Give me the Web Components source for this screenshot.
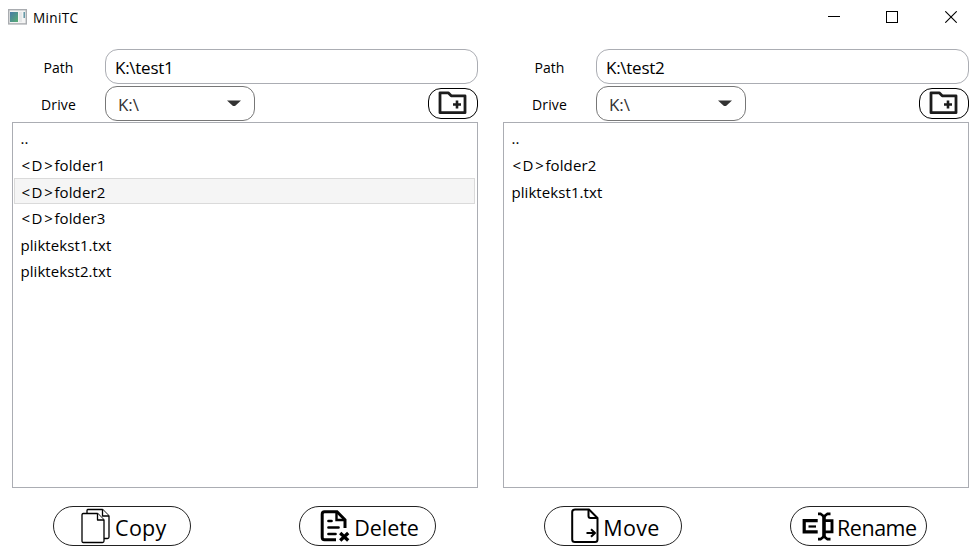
<!DOCTYPE html>
<html lang="en">
<head>
<meta charset="utf-8">
<title>MiniTC</title>
<style>
html,body{margin:0;height:100%;background:#fff;overflow:hidden}
body{font-family:"Open Sans","Noto Sans",sans-serif;color:#000}
</style>
</head>
<body>
<mini-window></mini-window>
<script>
const define = (name, html, init) => {
  const t = document.createElement('template');
  t.innerHTML = html;
  customElements.define(name, class extends HTMLElement {
    connectedCallback() {
      if (this.shadowRoot) return;
      this.attachShadow({mode: 'open'}).append(t.content.cloneNode(true));
      if (init) init(this, this.shadowRoot);
    }
  });
};

/* A single line of text tracked to a given advance width;
   a leading <D> marker gets its own, wider tracking. */
define('text-run', `<style>
:host{display:inline-block;white-space:nowrap;flex:none}
</style>`, (el, root) => {
  const add = (text, w) => {
    const s = document.createElement('span');
    s.textContent = text;
    root.append(s);
    s.style.letterSpacing = (w - s.getBoundingClientRect().width) / text.length + 'px';
  };
  const text = el.getAttribute('text'), w = +el.getAttribute('w');
  if (text.startsWith('<D>')) {
    el.style.marginLeft = '1px';
    add('<D>', 33);
    add(text.slice(3), w - 33);
  } else add(text, w);
});

define('title-bar', `<style>
:host{display:flex;height:34px;align-items:center;padding:0 21px 0 8px;box-sizing:border-box;font-size:13.6px;line-height:20px}
svg{display:block;flex:none}
text-run{margin-left:6px;margin-top:1px}
.ctl{display:flex;margin-left:auto}
.ctl svg+svg{margin-left:46px}
.ctl svg+svg+svg{margin-left:47px}
</style>
<svg width="19" height="16" viewBox="0 0 19 16"><defs><linearGradient id="g" x1="0" y1="0" x2="1" y2="1"><stop offset="0" stop-color="#467aa8"/><stop offset="1" stop-color="#58ad72"/></linearGradient></defs><rect x=".7" y=".7" width="17.6" height="14.2" fill="#f4f4f4" stroke="#a9acb0" stroke-width="1.4"/><rect x="2" y="3" width="8" height="10" fill="url(#g)"/><rect x="11" y="3" width="3" height="10" fill="#e5e7e8"/><rect x="15.5" y="3" width="1.4" height="6" fill="#5791a0"/></svg>
<text-run text="MiniTC" w="45.3"></text-run>
<div class="ctl">
<svg width="12" height="12"><path d="M0 5.5H12" stroke="#000"/></svg>
<svg width="12" height="12"><rect x=".5" y=".5" width="11" height="11" fill="none" stroke="#000"/></svg>
<svg width="12" height="12"><path d="M.3 .3L11.7 11.7M11.7 .3L.3 11.7" stroke="#000" stroke-width="1.1"/></svg>
</div>`);

define('path-field', `<style>
:host{display:flex;align-items:center;box-sizing:border-box;height:35px;border:1px solid #abadb3;border-radius:13px;padding:2px 0 0 9px;font-size:17px;line-height:24px}
</style><slot></slot>`);

define('drive-select', `<style>
:host{display:flex;align-items:center;justify-content:space-between;box-sizing:border-box;width:150px;height:35px;border:1px solid #777;border-radius:12px;padding:2px 13px 0 12px;font-size:17px;line-height:24px;color:#333}
svg{margin-top:-3px}
</style><slot></slot><svg width="14" height="6"><path d="M0 .4H14L8.6 5.5Q7 6.5 5.4 5.5Z" fill="#333"/></svg>`);

define('folder-button', `<style>
:host{display:flex;align-items:center;justify-content:center;box-sizing:border-box;width:50.5px;height:31px;margin-top:-1px;border:1px solid #000;border-radius:13px}
</style><svg width="30" height="24" viewBox="0 0 30 24"><path d="M2 1.8H10.2L13.2 4.8H27V21.7H2Z" fill="none" stroke="#1c1c1c" stroke-width="2.8" stroke-linejoin="round"/><path d="M19 9.5V17.5M15 13.5H23" stroke="#1c1c1c" stroke-width="2.6"/></svg>`);

define('file-row', `<style>
:host{display:flex;align-items:center;box-sizing:border-box;height:26.6px;padding:.2px 0 0 6.4px;font-size:15px;line-height:20px}
:host([selected]){height:26px;margin-bottom:.6px;padding:1px 0 0 5.4px;background:#f5f5f5;border:1px solid #dadada}
</style><slot></slot>`);

define('file-pane', `<style>
:host{display:grid;grid-template-columns:93px 1fr;grid-template-rows:35px 2px 35px 1px 366px;width:466px}
.label{display:flex;align-items:center;justify-content:center;font-size:14px;line-height:20px;padding-top:2px}
.drive{grid-row:3;grid-column:2;display:flex;justify-content:space-between;align-items:center}
.l2{grid-row:3}
.list{grid-row:5;grid-column:1/3;box-sizing:border-box;border:1px solid #abadb3;padding:2px 2px 0 1px}
</style>
<div class="label"><text-run text="Path" w="30"></text-run></div>
<path-field></path-field>
<div class="label l2"><text-run text="Drive" w="35"></text-run></div>
<div class="drive"><drive-select><text-run text="K:\\" w="21"></text-run></drive-select><folder-button></folder-button></div>
<div class="list"></div>`, (el, root) => {
  root.querySelector('path-field').innerHTML = `<text-run text="${el.getAttribute('path')}" w="58.5"></text-run>`;
  const widths = {'..': 8};
  root.querySelector('.list').innerHTML = el.getAttribute('files').split(',').map((f, i) =>
    `<file-row${String(i) === el.getAttribute('selected') ? ' selected' : ''}><text-run text="${f.replace(/</g, '&lt;')}" w="${widths[f] || (f[0] === '<' ? 84 : 91)}"></text-run></file-row>`).join('');
});

const icons = {
  copy: `<svg width="30" height="36" viewBox="0 0 30 36" fill="#fff" stroke="#000" stroke-width="1.3" stroke-linejoin="round"><path d="M7 1.5H21.5L28 8V29Q28 30.5 26.5 30.5H7.5Q6 30.5 6 29V2.5Q6 1.5 7 1.5Z"/><path d="M21.5 1.5V8H28"/><path d="M2.2 5.5H16.5L23 12V33Q23 34.5 21.5 34.5H2.2Q1 34.5 1 33V7Q1 5.5 2.2 5.5Z"/><path d="M16.5 5.5V12H23"/></svg>`,
  delete: `<svg width="30" height="32" viewBox="0 0 30 32" fill="none" stroke="#000" stroke-width="3"><path d="M16 29.8H4.5Q2.2 29.8 2.2 27.2V4.2Q2.2 1.8 4.5 1.8H17L25 9.8V18"/><path d="M16.5 2V10H25" stroke-width="2.4"/><path d="M8.5 11H11.5M8.5 17.5H18.5M8.5 24H15.5" stroke-linecap="round" stroke-width="2.7"/><path d="M20.2 23L28.2 30.5M28.2 23L20.2 30.5" stroke-width="3.3"/></svg>`,
  move: `<svg width="28" height="36" viewBox="0 0 28 36" fill="none" stroke="#000" stroke-width="2" stroke-linejoin="round"><path d="M4 1.5H18L26.5 10V31.5Q26.5 34 24 34H4Q1.2 34 1.2 31.5V4Q1.2 1.5 4 1.5Z"/><path d="M17.5 1.7V8Q17.5 10 19.5 10H26"/><path d="M15.5 25H24M20 21.2L24 25L20 28.8"/></svg>`,
  rename: `<svg width="32" height="29" viewBox="0 0 32 29" fill="none" stroke="#000"><path d="M15.7 8.6H2.2V19.9H15.7" stroke-width="3.2"/><path d="M6.5 14.5H14" stroke-width="2.2"/><path d="M22 4V25" stroke-width="3.6"/><path d="M22 8.6H30V19.9H22" stroke-width="2.9"/><path d="M16 1.8H18.5L22 4.5L25.5 1.8H28.5M16 27.2H18.5L22 24.5L25.5 27.2H28.5" stroke-width="2.7"/></svg>`
};
define('action-button', `<style>
:host{display:flex;align-items:center;box-sizing:border-box;width:137.5px;height:40px;border:1px solid #222;border-radius:20px;font-size:21.5px;line-height:30px}
.i{display:flex;flex:none}
text-run{margin-top:3px}
</style><span class="i"></span>`, (el, root) => {
  const i = root.querySelector('.i');
  i.innerHTML = icons[el.getAttribute('icon')];
  i.style.paddingLeft = el.getAttribute('lead') + 'px';
  const t = document.createElement('text-run');
  t.setAttribute('text', el.getAttribute('label'));
  t.setAttribute('w', el.getAttribute('w'));
  t.style.marginLeft = el.getAttribute('gap') + 'px';
  root.append(t);
});

define('mini-window', `<style>
:host{display:block;width:978px;height:551px}
.panes{display:flex;gap:25px;padding:15px 0 0 12px}
.actions{display:flex;gap:108px;padding:18px 0 0 53px}
</style>
<title-bar></title-bar>
<div class="panes">
<file-pane path="K:\\test1" files="..,<D>folder1,<D>folder2,<D>folder3,pliktekst1.txt,pliktekst2.txt" selected="2"></file-pane>
<file-pane path="K:\\test2" files="..,<D>folder2,pliktekst1.txt"></file-pane>
</div>
<div class="actions">
<action-button icon="copy" label="Copy" lead="26.7" gap="4.4" w="51.5"></action-button>
<action-button icon="delete" label="Delete" lead="20.6" gap="4.2" w="64.5"></action-button>
<action-button icon="move" label="Move" lead="26" gap="4.3" w="56.5"></action-button>
<action-button icon="rename" label="Rename" lead="11.8" gap="2.8" w="79.5"></action-button>
</div>`);
</script>
</body>
</html>
